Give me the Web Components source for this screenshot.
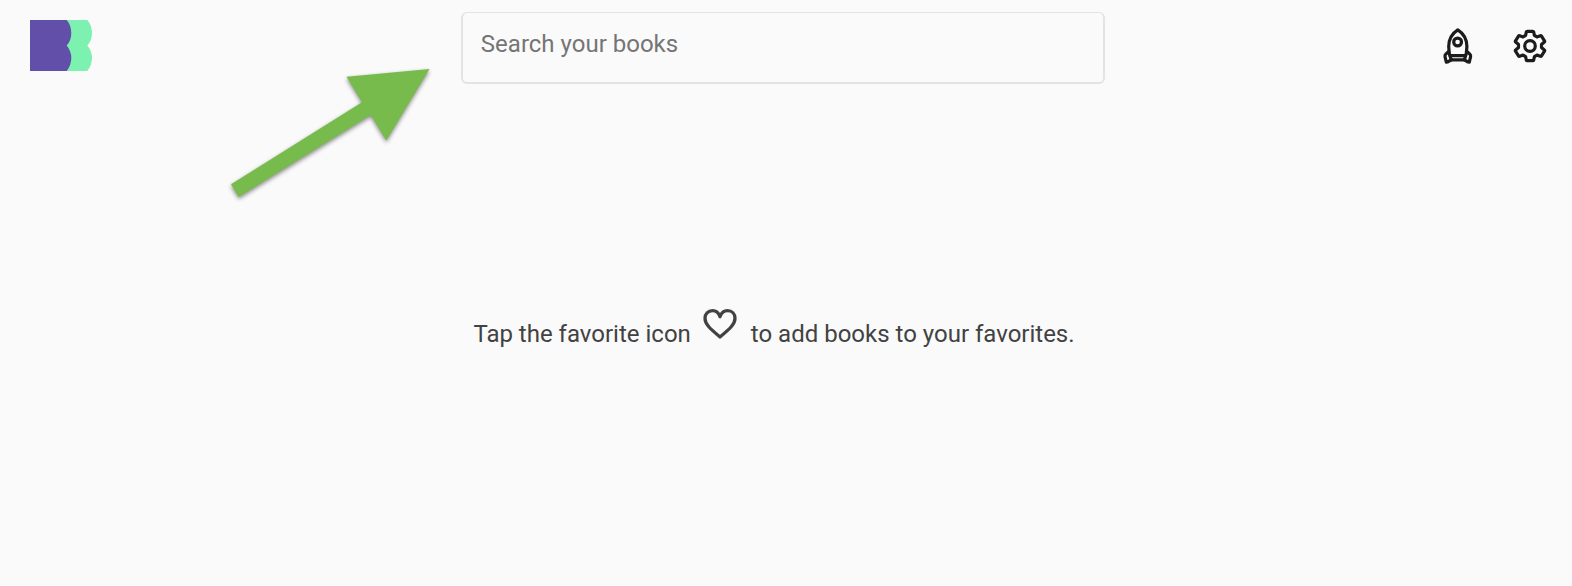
<!DOCTYPE html>
<html lang="en">
<head>
<meta charset="utf-8">
<title>Books</title>
<style>
html, body { margin: 0; background: #fafafa; }
body { font-family: Roboto, sans-serif; font-size: 24px; line-height: 32px; color: #424242; }
</style>
</head>
<body>
<books-app></books-app>
<script>
const define = (name, html) => customElements.define(name, class extends HTMLElement {
  constructor() {
    super();
    this.attachShadow({ mode: "open" }).innerHTML = html;
  }
});

define("book-logo", `
<style>
:host { display: block; }
a, svg { display: block; width: 62px; height: 51px; }
</style>
<a href="#" aria-label="Home"><svg viewBox="0 0 62 51" aria-hidden="true">
<path fill="#7cf1b0" d="M30 0H57.300Q62 5.500 62 13T57.300 25.500Q62 31 62 38T57.300 51H30z"/>
<path fill="#614fa9" d="M0 0H36.700Q41.300 5.500 41.300 13T36.700 25.500Q41.300 31 41.300 38T36.700 51H0z"/>
</svg></a>`);

define("book-search", `
<style>
:host { display: block; }
input {
  display: block; box-sizing: border-box; width: 100%; height: 72px; margin: 0;
  padding: 0 18px 8px; border: 2px solid #e3e3e3; border-top-width: 1px; border-radius: 6px;
  background: transparent; font: inherit; color: #424242; outline: none;
}
input::placeholder { color: #757575; opacity: 1; }
</style>
<input type="search" placeholder="Search your books" aria-label="Search your books">`);

customElements.define("icon-button", class extends HTMLElement {
  constructor() {
    super();
    this.attachShadow({ mode: "open" }).innerHTML = `
<style>
:host { display: block; }
button { display: grid; place-items: center; width: 40px; height: 40px; margin: 0; padding: 0; border: 0; background: none; color: #1c1c1c; cursor: pointer; }
::slotted(svg) { display: block; width: 40px; height: 40px; fill: none; stroke: currentColor; stroke-width: 3.2; stroke-linejoin: round; stroke-linecap: round; }
</style>
<button type="button"><slot></slot></button>`;
  }
  connectedCallback() {
    this.shadowRoot.querySelector("button").setAttribute("aria-label", this.getAttribute("label"));
  }
});

define("app-header", `
<style>
:host { display: grid; grid-template-columns: 1fr 42% 1fr; align-items: start; padding: 12px 22px 12px 16px; }
nav { display: flex; justify-content: flex-end; gap: 32px; padding-top: 14px; }
book-logo { padding: 8px 0 0 14px; }
</style>
<book-logo></book-logo>
<book-search></book-search>
<nav aria-label="Actions">
<icon-button label="Discover"><svg viewBox="0 0 40 40" aria-hidden="true">
<path d="M19.800 3.800C14 7.500 10.700 13.500 10.700 20.500C10.700 26 11.500 30 13.200 33.800H26.400C28.100 30 28.900 26 28.900 20.500C28.900 13.500 25.600 7.500 19.800 3.800Z"/>
<circle cx="19.600" cy="16" r="3.900"/>
<path d="M12 29.600H27.600M10.700 25.500L7.800 28.200Q6.700 29.200 7 30.600L8.300 36.200L10.300 35.600L13.200 33.800M28.900 25.500L31.800 28.200Q32.900 29.200 32.600 30.600L31.300 36.200L29.300 35.600L26.400 33.800"/>
</svg></icon-button>
<icon-button label="Settings"><svg viewBox="-20 -20 40 40" aria-hidden="true">
<path d="M-2.700-14.700H2.700Q3.500-14.700 3.700-14L4.400-10.600L6.900-9.100L10.300-10.300Q11-10.500 11.500-9.900L14.500-5.200Q14.900-4.500 14.300-4L11.500-1.500V1.500L14.300 4Q14.900 4.500 14.500 5.200L11.500 9.900Q11 10.500 10.300 10.300L6.900 9.100L4.400 10.600L3.700 14Q3.500 14.700 2.700 14.700H-2.700Q-3.500 14.700-3.700 14L-4.400 10.600L-6.900 9.100L-10.300 10.300Q-11 10.500-11.500 9.900L-14.500 5.200Q-14.900 4.500-14.300 4L-11.500 1.500V-1.500L-14.300-4Q-14.900-4.500-14.500-5.200L-11.500-9.900Q-11-10.500-10.300-10.300L-6.900-9.100L-4.400-10.600L-3.700-14Q-3.500-14.700-2.700-14.700Z"/>
<circle r="5.300"/>
</svg></icon-button>
</nav>`);

define("empty-favorites", `
<style>
:host { display: flex; justify-content: center; align-items: flex-end; padding: 208px 24px 0 0; }
p { display: flex; align-items: flex-end; margin: 0; }
svg { display: block; width: 40px; height: 40px; margin: 0 11px 6px 9px; fill: none; stroke: #424242; stroke-width: 3.300; stroke-linejoin: round; }
</style>
<p><span>Tap the favorite icon</span>
<svg viewBox="0 0 40 40" role="img" aria-label="heart"><path d="M20 12.800C18.700 9 16 6.700 12.500 6.700C8 6.700 5 10 5 14.200C5 20.500 10.500 25 20 33C29.500 25 35 20.500 35 14.200C35 10 32 6.700 27.500 6.700C24 6.700 21.300 9 20 12.800Z"/></svg>
<span>to add books to your favorites.</span></p>`);

define("guide-arrow", `
<style>
:host { position: absolute; left: 220px; top: 60px; pointer-events: none; }
svg { display: block; width: 220px; height: 150px; filter: drop-shadow(0 2px 2px rgba(0,0,0,.45)); }
</style>
<svg viewBox="0 0 220 150" aria-hidden="true"><path fill="#78bb4d" d="M209.500 9L126.500 16.700L142 42.300L11 124.300L18.700 137L150.700 55L166.300 80.500Z"/></svg>`);

define("books-app", `
<style>:host { display: block; position: relative; }</style>
<app-header></app-header>
<main><empty-favorites></empty-favorites></main>
<guide-arrow></guide-arrow>`);
</script>
</body>
</html>
